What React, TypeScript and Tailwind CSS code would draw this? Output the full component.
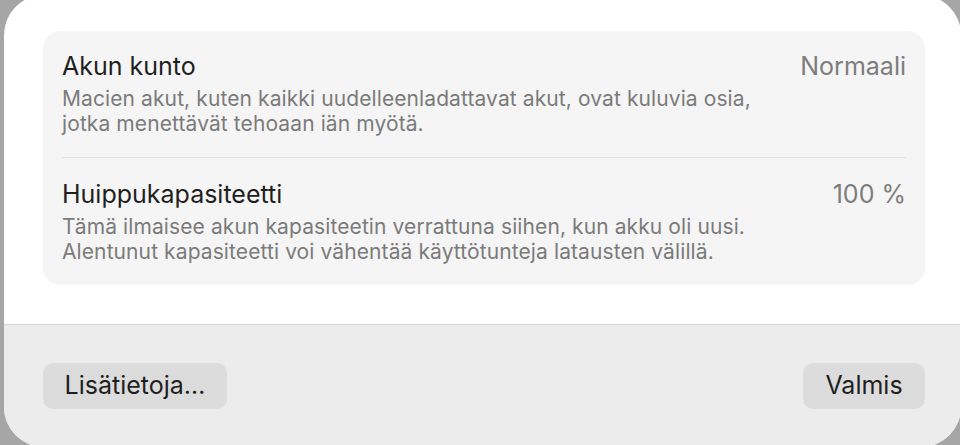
import { Fragment } from 'react';

interface InfoRow {
  title: string;
  value: string;
  lines: string[];
}

const rows: InfoRow[] = [
  {
    title: 'Akun kunto',
    value: 'Normaali',
    lines: [
      'Macien akut, kuten kaikki uudelleenladattavat akut, ovat kuluvia osia,',
      'jotka menettävät tehoaan iän myötä.',
    ],
  },
  {
    title: 'Huippukapasiteetti',
    value: '100 %',
    lines: [
      'Tämä ilmaisee akun kapasiteetin verrattuna siihen, kun akku oli uusi.',
      'Alentunut kapasiteetti voi vähentää käyttötunteja latausten välillä.',
    ],
  },
];

function Row({ row, last }: { row: InfoRow; last: boolean }) {
  return (
    <div
      className={`flex items-start justify-between gap-6 py-[21px] first:pt-[20px] ${
        last ? '' : 'border-b border-[#e3e3e3]'
      }`}
    >
      <div className="min-w-0">
        <div className="text-[25px] leading-[30px] text-[#1f1f1f]">{row.title}</div>
        <div className="mt-[5px] text-[21px] leading-[25px] tracking-[0.1px] text-[#7b7b7b]">
          {row.lines.map((line, i) => (
            <Fragment key={i}>
              {line}
              {i < row.lines.length - 1 && <br />}
            </Fragment>
          ))}
        </div>
      </div>
      <div className="shrink-0 text-[25px] leading-[30px] text-[#7d7d7d]">{row.value}</div>
    </div>
  );
}

export default function App() {
  return (
    <div
      className="h-[445px] w-[960px] overflow-hidden bg-[#a6a6a6]"
      style={{ fontFamily: 'Inter, "Noto Sans", sans-serif' }}
    >
      <div className="-mt-[5px] ml-[4px] flex h-[452px] w-[957px] flex-col overflow-hidden rounded-[40px] bg-white">
        <div className="flex-1 pl-[39px] pr-[36px] pt-[36px]">
          <div className="rounded-[18px] bg-[#f5f5f5] px-[19px]">
            {rows.map((row, i) => (
              <Row key={row.title} row={row} last={i === rows.length - 1} />
            ))}
          </div>
        </div>

        <div className="flex h-[123px] items-center justify-between border-t border-[#d4d4d4] bg-[#ececec] pl-[39px] pr-[36px]">
          <button className="flex h-[46px] w-[184px] items-center justify-center rounded-[10px] bg-[#dcdcdc] text-[25px] text-[#1f1f1f]">
            Lisätietoja…
          </button>
          <button className="flex h-[46px] w-[122px] items-center justify-center rounded-[10px] bg-[#dcdcdc] text-[25px] text-[#1f1f1f]">
            Valmis
          </button>
        </div>
      </div>
    </div>
  );
}
